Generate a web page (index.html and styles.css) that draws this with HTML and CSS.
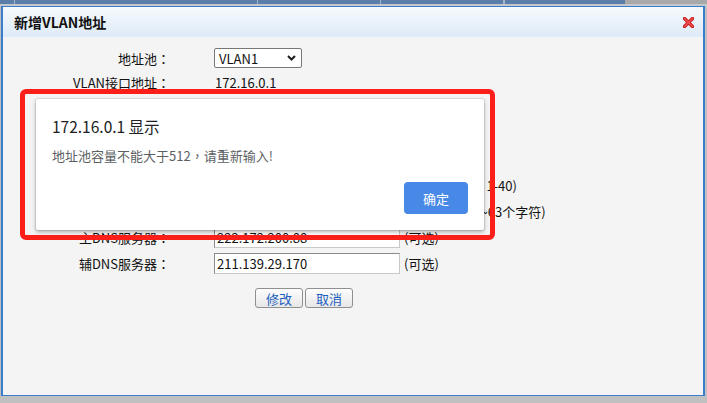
FILE: index.html
```html
<!DOCTYPE html>
<html>
	<head>
		<meta charset="utf-8" />
		<title>新增VLAN地址</title>
		<link rel="stylesheet" href="styles.css">
	</head>
	<body>
		<div class="topbar">
			<div class="tabs">
				<span class="tab w1"></span>
				<span class="tab w2"></span>
				<span class="tab w3"></span>
				<span class="tab w4"></span>
				<span class="tab w5"></span>
			</div>
		</div>

		<div class="window">
			<div class="titlebar">
				<span class="title">新增VLAN地址</span>
				<svg class="close" width="11" height="11" viewBox="0 0 11 11">
					<path d="M1.5 1.5L9.5 9.5M9.5 1.5L1.5 9.5" stroke="#c91b1b" stroke-width="3.4" stroke-linecap="round" />
					<path d="M1.5 1.5L9.5 9.5M9.5 1.5L1.5 9.5" stroke="#f25656" stroke-width="1.3" stroke-linecap="round" />
				</svg>
			</div>

			<div class="form">
				<div class="row short">
					<span class="label">地址池<span class="colon">：</span></span>
					<div class="select">
						<span>VLAN1</span>
						<svg width="9" height="6" viewBox="0 0 9 6">
							<path d="M1 1l3.5 3.5L8 1" stroke="#1e1e1e" stroke-width="2" fill="none" />
						</svg>
					</div>
				</div>
				<div class="row short">
					<span class="label">VLAN接口地址<span class="colon">：</span></span>
					<span class="value">172.16.0.1</span>
				</div>
				<div class="row">
					<span class="label">子网掩码<span class="colon">：</span></span>
					<span class="value">255.255.255.0</span>
				</div>
				<div class="row">
					<span class="label">起始地址<span class="colon">：</span></span>
					<span class="input">172.16.0.2</span>
				</div>
				<div class="row">
					<span class="label">结束地址<span class="colon">：</span></span>
					<span class="input">172.16.2.254</span>
				</div>
				<div class="row">
					<span class="label">地址租期<span class="colon">：</span></span>
					<span class="input">30</span>
					<span class="hint">(单位：分钟，1-40)</span>
				</div>
				<div class="row">
					<span class="label">域名<span class="colon">：</span></span>
					<span class="input"></span>
					<span class="hint">(可选，长度1~63个字符)</span>
				</div>
				<div class="row">
					<span class="label">主DNS服务器<span class="colon">：</span></span>
					<span class="input">222.172.200.88</span>
					<span class="hint">(可选)</span>
				</div>
				<div class="row">
					<span class="label">辅DNS服务器<span class="colon">：</span></span>
					<span class="input">211.139.29.170</span>
					<span class="hint">(可选)</span>
				</div>
				<div class="buttons">
					<button class="btn">修改</button>
					<button class="btn">取消</button>
				</div>
			</div>
		</div>

		<div class="alert-frame"></div>
		<div class="alert">
			<div class="alert-title">172.16.0.1 显示</div>
			<div class="alert-text">地址池容量不能大于512<span class="comma">，</span>请重新输入!</div>
			<button class="alert-btn">确定</button>
		</div>
	</body>
</html>
```

FILE: styles.css
```css
* {
	margin: 0;
	padding: 0;
	box-sizing: border-box;
}

body {
	width: 707px;
	height: 403px;
	overflow: hidden;
	background-color: #c0c0c0;
	font-family: "Noto Sans CJK SC", sans-serif;
	font-size: 13px;
	color: #111;
	position: relative;
}

.topbar {
	height: 6px;
	background-color: #a9a9a9;
	border-bottom: 2px solid #c4c7cb;
}

.tabs {
	display: flex;
	width: 625px;
	height: 4px;
	background-color: #5b7ea8;
}

.tab {
	height: 4px;
	border-right: 1px solid #a3b5cb;
}

.w1 { width: 15px; }
.w2 { width: 243px; }
.w3 { width: 123px; }
.w4 { width: 123px; }

.window {
	margin-left: 1px;
	width: 704px;
	height: 390px;
	border: 2px solid #3b7ccb;
	border-top-width: 1px;
	border-bottom-width: 1px;
	background-color: #f4f4f4;
}

.titlebar {
	height: 30px;
	display: flex;
	align-items: center;
	justify-content: space-between;
	padding: 0 9px 0 11px;
	background: linear-gradient(#f5f9fd, #deeaf8);
}

.title {
	font-weight: bold;
	font-size: 14px;
	color: #111;
}

.close {
	margin-top: 1px;
}

.form {
	padding-top: 9px;
}

.row {
	display: flex;
	align-items: center;
	height: 26px;
}

.row.short {
	height: 24px;
}

.label {
	width: 167px;
	text-align: right;
	margin-right: 44px;
}

/* 标点居中显示 */
.colon {
	font-family: "Noto Sans CJK JP", sans-serif;
}

.comma {
	font-family: "Noto Sans CJK TC", sans-serif;
}

.select {
	width: 88px;
	height: 20px;
	display: flex;
	align-items: center;
	justify-content: space-between;
	padding: 0 5px 0 4px;
	background-color: #fff;
	border: 1px solid #777;
	border-radius: 2px;
}

.value {
	padding-left: 1px;
}

.input {
	width: 186px;
	height: 21px;
	line-height: 19px;
	padding-left: 2px;
	background-color: #fff;
	border: 1px solid #8a8a8a;
	border-right-color: #c8c8c8;
	border-bottom-color: #c8c8c8;
}

.hint {
	margin-left: 4px;
}

.buttons {
	display: flex;
	gap: 2px;
	padding-left: 252px;
	margin-top: 12px;
}

.btn {
	width: 48px;
	height: 20px;
	font-family: "Noto Sans CJK SC", sans-serif;
	font-size: 13px;
	color: #1d5fc1;
	border: 1px solid #8f8f8f;
	border-radius: 3px;
	background: linear-gradient(#fdfdfd, #e7e7e7);
}

.alert-frame {
	position: absolute;
	left: 20px;
	top: 89px;
	width: 475px;
	height: 151px;
	border: 5px solid #fb1e19;
	border-radius: 6px;
}

.alert {
	position: absolute;
	left: 36px;
	top: 99px;
	width: 448px;
	height: 131px;
	display: flex;
	flex-direction: column;
	padding: 16px;
	background-color: #fff;
	border-radius: 2px;
	box-shadow: 0 0 0 1px rgba(0, 0, 0, 0.08), 0 2px 4px rgba(0, 0, 0, 0.3);
}

.alert-title {
	font-size: 15.5px;
	line-height: 20px;
	color: #202124;
	margin-top: 1px;
}

.alert-text {
	margin-top: 11px;
	line-height: 18px;
	color: #5c5f63;
}

.alert-btn {
	align-self: flex-end;
	margin-top: auto;
	width: 64px;
	height: 32px;
	font-family: "Noto Sans CJK SC", sans-serif;
	font-size: 13px;
	color: #fff;
	background-color: #4889e8;
	border: none;
	border-radius: 4px;
}
```
